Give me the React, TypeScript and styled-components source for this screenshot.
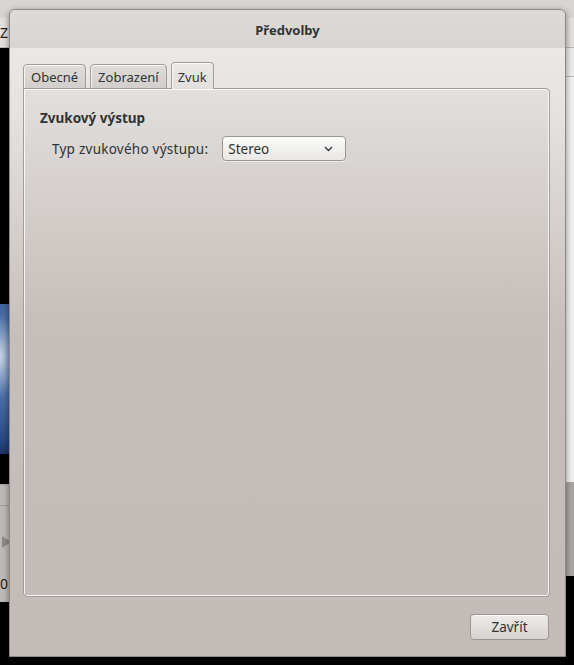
import React from "react";
import styled, { createGlobalStyle } from "styled-components";

const Global = createGlobalStyle`
  html, body { margin: 0; padding: 0; background: #000; overflow: hidden; }
  body { font-family: "Noto Sans", "DejaVu Sans", sans-serif; font-size: 13px; color: #2e3436; }
  * { box-sizing: border-box; }
`;

const Stage = styled.div`
  position: relative;
  width: 574px;
  height: 665px;
  background: #000;
  overflow: hidden;
`;

/* ---------- parent window in the background ---------- */
const ParentWindow = styled.div`
  width: 574px;
  display: flex;
  flex-direction: column;
`;

const ParentTitleBar = styled.div`
  height: 18px;
  background: #d8d4d1;
  display: flex;
  justify-content: center;
  align-items: flex-end;
  overflow: hidden;
`;

const ParentTitle = styled.span`
  font-weight: bold;
  color: #a9a5a2;
  line-height: 1;
  transform: translateY(4px);
`;

const ParentToolbar = styled.div`
  height: 30px;
  background: #e2dfdc;
  display: flex;
  align-items: center;
  border-bottom: 1px solid #b9b5b2;
`;

const ToolbarText = styled.span`
  color: #222;
  font-size: 14px;
`;

const ParentMain = styled.div`
  display: grid;
  grid-template-columns: 1fr 200px;
`;

const LeftCol = styled.div`
  display: flex;
  flex-direction: column;
`;

const Video = styled.div`
  height: 436px;
  background: #000;
  display: flex;
  align-items: flex-end;
`;

const VideoImage = styled.div`
  width: 40px;
  height: 150px;
  margin-bottom: 30px;
  background: radial-gradient(ellipse at 0% 35%, #c9d5e6 0%, #4a6da6 30%, #2a4a86 60%, #0b1a3a 85%, #000 100%);
`;

const Controls = styled.div`
  height: 118px;
  background: #bdb9b6;
  border-top: 1px solid #a7a3a0;
  display: flex;
  flex-direction: column;
`;

const ControlsLine = styled.div`
  margin-top: 20px;
  height: 1px;
  background: #a09c99;
`;

const PlayArrow = styled.div`
  margin-top: 30px;
  margin-left: 2px;
  width: 0;
  height: 0;
  border-top: 6px solid transparent;
  border-bottom: 6px solid transparent;
  border-left: 9px solid #8f8b88;
`;

const TimeText = styled.span`
  margin-top: 26px;
  font-size: 14px;
  color: #222;
`;

const RightCol = styled.div`
  display: flex;
  flex-direction: column;
`;

const SideRow = styled.div`
  height: 29px;
  background: #ebebeb;
  border-bottom: 1px solid #b6b3b0;
`;

const SideList = styled.div`
  height: 405px;
  background: #f0f0f0;
`;

const SideBottom = styled.div`
  height: 94px;
  background: #a9a5a2;
`;

/* ---------- preferences dialog ---------- */
const Dialog = styled.div`
  position: absolute;
  left: 9px;
  top: 9px;
  width: 557px;
  height: 648px;
  border: 1px solid #8f8986;
  border-radius: 6px 6px 0 0;
  box-shadow: 0 2px 6px rgba(0, 0, 0, 0.45);
  display: flex;
  flex-direction: column;
  overflow: hidden;
  background: #c3bbb7;
`;

const HeaderBar = styled.div`
  height: 38px;
  flex: none;
  background: linear-gradient(#dedad7, #d8d4d1);
  display: flex;
  align-items: center;
  justify-content: center;
`;

const DialogTitle = styled.span`
  font-weight: bold;
  font-size: 13px;
  color: #2e3436;
  margin-top: 1px;
`;

const DialogBody = styled.div`
  flex: 1;
  display: flex;
  flex-direction: column;
  padding: 14px 15px 16px 13px;
  background: linear-gradient(180deg, #ebe9e7 0px, #e4e1df 70px, #c6beba 290px, #c3bbb7 100%);
`;

const Notebook = styled.div`
  flex: 1;
  display: flex;
  flex-direction: column;
`;

const TabStrip = styled.div`
  display: flex;
  align-items: flex-end;
  gap: 4px;
  height: 27px;
  margin-bottom: -1px;
  position: relative;
  z-index: 1;
`;

const Tab = styled.div<{ $active?: boolean }>`
  height: ${(p) => (p.$active ? "27px" : "25px")};
  padding: 1px ${(p) => (p.$active ? "6px" : "7px")} 0;
  display: flex;
  align-items: center;
  border: 1px solid #a29c98;
  border-bottom: ${(p) => (p.$active ? "none" : "1px solid #a29c98")};
  border-radius: 4px 4px 0 0;
  box-shadow: inset 1px 1px 0 rgba(255, 255, 255, 0.75);
  background: ${(p) =>
    p.$active
      ? "linear-gradient(#ebe9e7, #e2dfdd)"
      : "linear-gradient(#dfdcd9, #d2cecb)"};
  color: #2e3436;
  font-size: 13px;
`;

const Panel = styled.div`
  flex: 1;
  border: 1px solid #a29c98;
  border-radius: 0 4px 4px 4px;
  box-shadow: inset 1px 1px 0 rgba(255, 255, 255, 0.8), inset -1px -1px 0 rgba(255, 255, 255, 0.8);
  background: linear-gradient(180deg, #e2dfdd 0px, #c6beba 230px, #c3bbb7 100%);
  padding: 20px 16px;
  display: flex;
  flex-direction: column;
`;

const SectionTitle = styled.div`
  font-weight: bold;
  font-size: 13.5px;
  line-height: 18px;
  color: #2e3436;
`;

const FieldRow = styled.div`
  display: flex;
  align-items: center;
  margin-top: 9px;
  padding-left: 12px;
  gap: 14px;
`;

const FieldLabel = styled.span`
  font-size: 13.5px;
  letter-spacing: 0.25px;
  color: #2e3436;
`;

const Combo = styled.div`
  width: 124px;
  height: 25px;
  border: 1px solid #9c9692;
  border-radius: 4px;
  background: linear-gradient(#fbfbfa, #e9e7e5);
  box-shadow: 0 1px 0 rgba(255, 255, 255, 0.6);
  display: flex;
  align-items: center;
  justify-content: space-between;
  padding: 0 12px 0 5px;
  font-size: 13.5px;
  color: #2e3436;
`;

const Footer = styled.div`
  display: flex;
  justify-content: flex-end;
  padding-top: 17px;
  padding-right: 1px;
`;

const Button = styled.div`
  width: 79px;
  height: 26px;
  border: 1px solid #9c9692;
  border-radius: 4px;
  background: linear-gradient(#edebe9, #d7d3d0);
  box-shadow: inset 0 1px 0 rgba(255, 255, 255, 0.8);
  display: flex;
  align-items: center;
  justify-content: center;
  font-size: 13.5px;
  color: #2e3436;
`;

const Chevron = () => (
  <svg width="9" height="6" viewBox="0 0 9 6">
    <path d="M1 1 L4.5 4.5 L8 1" fill="none" stroke="#2e3436" strokeWidth="1.3" />
  </svg>
);

export default function App() {
  return (
    <>
      <Global />
      <Stage>
        <ParentWindow>
          <ParentTitleBar>
            <ParentTitle>Videa</ParentTitle>
          </ParentTitleBar>
          <ParentToolbar>
            <ToolbarText>Z</ToolbarText>
          </ParentToolbar>
          <ParentMain>
            <LeftCol>
              <Video>
                <VideoImage />
              </Video>
              <Controls>
                <ControlsLine />
                <PlayArrow />
                <TimeText>0</TimeText>
              </Controls>
            </LeftCol>
            <RightCol>
              <SideRow />
              <SideList />
              <SideBottom />
            </RightCol>
          </ParentMain>
        </ParentWindow>

        <Dialog>
          <HeaderBar>
            <DialogTitle>Předvolby</DialogTitle>
          </HeaderBar>
          <DialogBody>
            <Notebook>
              <TabStrip>
                <Tab>Obecné</Tab>
                <Tab>Zobrazení</Tab>
                <Tab $active>Zvuk</Tab>
              </TabStrip>
              <Panel>
                <SectionTitle>Zvukový výstup</SectionTitle>
                <FieldRow>
                  <FieldLabel>Typ zvukového výstupu:</FieldLabel>
                  <Combo>
                    <span>Stereo</span>
                    <Chevron />
                  </Combo>
                </FieldRow>
              </Panel>
            </Notebook>
            <Footer>
              <Button>Zavřít</Button>
            </Footer>
          </DialogBody>
        </Dialog>
      </Stage>
    </>
  );
}
